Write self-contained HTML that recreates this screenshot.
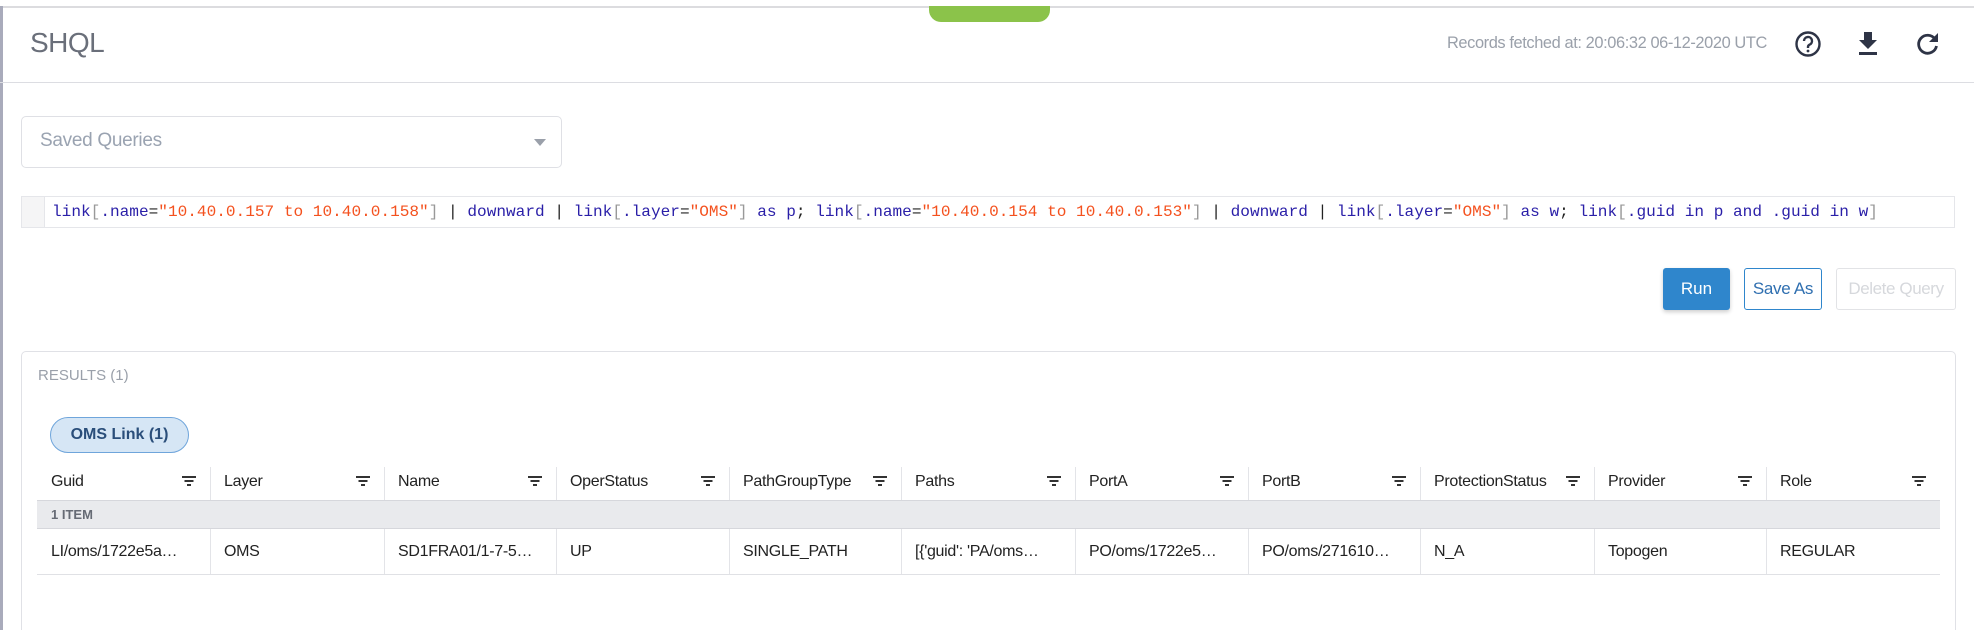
<!DOCTYPE html>
<html style="width:1974px;height:630px;overflow:hidden"><head><meta charset="utf-8"><style>
*{box-sizing:border-box;margin:0;padding:0}
body{width:1974px;height:630px;overflow:hidden;background:#fff;font-family:"Liberation Sans",sans-serif;position:relative;color:#222}
.abs{position:absolute}
.code{font-family:"Liberation Mono",monospace;font-size:16.1px;white-space:pre}
.k{color:#2a1fa8}.s{color:#f4511e}.b{color:#999}.p{color:#222}
.th,.td{position:absolute;font-size:16px;letter-spacing:-0.3px}
.th{color:#222}
.vl{position:absolute;width:1px;background:#e3e4e8}
.flt{position:absolute;width:14px;height:12px}
.flt i{position:absolute;height:2px;background:#333;left:50%;transform:translateX(-50%)}
</style></head><body>
<div class="abs" style="left:0;top:6px;width:1974px;height:2px;background:#dcdcdf"></div>
<div class="abs" style="left:0;top:6px;width:3px;height:624px;background:#a9abbb"></div>
<div class="abs" style="left:929px;top:6px;width:121px;height:16px;background:#8bc34a;border-radius:0 0 12px 12px"></div>
<div class="abs" style="left:30px;top:27px;font-size:28px;font-weight:normal;color:#6a6f7a;letter-spacing:-0.5px">SHQL</div>
<div class="abs" style="left:1447px;top:34px;font-size:16.4px;color:#9aa0aa;letter-spacing:-0.4px">Records fetched at: 20:06:32 06-12-2020 UTC</div>
<svg class="abs" style="left:1794px;top:30px" width="28" height="28" viewBox="0 0 28 28"><circle cx="14" cy="14" r="11.5" fill="none" stroke="#2e3446" stroke-width="2.4"/><path d="M10 11a4 4 0 1 1 5.5 3.7c-1 .5-1.5 1.2-1.5 2.3v1" fill="none" stroke="#2e3446" stroke-width="2.4"/><circle cx="14" cy="21" r="1.4" fill="#2e3446"/></svg>
<svg class="abs" style="left:1857px;top:32px" width="22" height="24" viewBox="0 0 22 24"><path d="M7 0h8v8h5l-9 9-9-9h5z" fill="#2e3446"/><rect x="2" y="20" width="18" height="3" fill="#2e3446"/></svg>
<svg class="abs" style="left:1916px;top:31px" width="24" height="24" viewBox="0 0 24 24"><path d="M19 8A9 9 0 1 0 20.5 15" fill="none" stroke="#2e3446" stroke-width="2.8"/><path d="M22 2v9h-9z" fill="#2e3446"/></svg>
<div class="abs" style="left:0;top:82px;width:1974px;height:1px;background:#dcdde2"></div>

<div class="abs" style="left:21px;top:116px;width:541px;height:52px;border:1px solid #dfe0e5;border-radius:5px"></div>
<div class="abs" style="left:40px;top:130px;font-size:19px;color:#9aa3b1;letter-spacing:-0.3px">Saved Queries</div>
<div class="abs" style="left:534px;top:139px;width:0;height:0;border-left:6px solid transparent;border-right:6px solid transparent;border-top:7px solid #9aa0aa"></div>

<div class="abs" style="left:21px;top:196px;width:1934px;height:32px;border:1px solid #e5e6ea"></div>
<div class="abs" style="left:22px;top:197px;width:23px;height:30px;background:#f5f5f6;border-right:1px solid #e5e6ea"></div>
<div class="abs code" style="left:52px;top:203px"><span class="k">link</span><span class="b">[</span><span class="k">.name</span><span class="p">=</span><span class="s">"10.40.0.157 to 10.40.0.158"</span><span class="b">]</span> <span class="p">|</span> <span class="k">downward</span> <span class="p">|</span> <span class="k">link</span><span class="b">[</span><span class="k">.layer</span><span class="p">=</span><span class="s">"OMS"</span><span class="b">]</span> <span class="k">as p</span><span class="p">;</span> <span class="k">link</span><span class="b">[</span><span class="k">.name</span><span class="p">=</span><span class="s">"10.40.0.154 to 10.40.0.153"</span><span class="b">]</span> <span class="p">|</span> <span class="k">downward</span> <span class="p">|</span> <span class="k">link</span><span class="b">[</span><span class="k">.layer</span><span class="p">=</span><span class="s">"OMS"</span><span class="b">]</span> <span class="k">as w</span><span class="p">;</span> <span class="k">link</span><span class="b">[</span><span class="k">.guid in p and .guid in w</span><span class="b">]</span></div>

<div class="abs" style="left:1663px;top:268px;width:67px;height:42px;background:#2f86cc;border-radius:3px;color:#fff;font-size:17px;text-align:center;line-height:42px;box-shadow:0 2px 4px rgba(0,0,0,.2)">Run</div>
<div class="abs" style="left:1744px;top:268px;width:78px;height:42px;border:1px solid #2f86cc;border-radius:3px;color:#2f6fb0;font-size:17px;text-align:center;line-height:40px;letter-spacing:-0.3px">Save As</div>
<div class="abs" style="left:1836px;top:268px;width:120px;height:42px;border:1px solid #e2e3e6;border-radius:3px;color:#d6d8dc;font-size:17px;text-align:center;line-height:40px;letter-spacing:-0.4px">Delete Query</div>

<div class="abs" style="left:21px;top:351px;width:1935px;height:279px;border:1px solid #e0e1e6;border-bottom:none;border-radius:5px 5px 0 0"></div>
<div class="abs" style="left:38px;top:367px;font-size:15px;color:#9aa0aa">RESULTS (1)</div>
<div class="abs" style="left:50px;top:417px;width:139px;height:36px;background:#d6e6f5;border:1px solid #6fa5db;border-radius:18px;color:#2a4e7a;font-weight:bold;font-size:16px;text-align:center;line-height:34px">OMS Link (1)</div>

<div class="abs" style="left:37px;top:500px;width:1903px;height:29px;background:#e9eaed;border-top:1px solid #d6d7dc;border-bottom:1px solid #d6d7dc"></div>
<div class="abs" style="left:51px;top:507px;font-size:13px;font-weight:bold;color:#666b75">1 ITEM</div>
<div class="abs" style="left:37px;top:574px;width:1903px;height:1px;background:#e0e1e5"></div>

<div id="cols"></div>
<script>
var heads=["Guid","Layer","Name","OperStatus","PathGroupType","Paths","PortA","PortB","ProtectionStatus","Provider","Role"];
var vals=["LI/oms/1722e5a…","OMS","SD1FRA01/1-7-5…","UP","SINGLE_PATH","[{'guid': 'PA/oms…","PO/oms/1722e5…","PO/oms/271610…","N_A","Topogen","REGULAR"];
var xs=[37,210,384,556,729,901,1075,1248,1420,1594,1766,1940];
var h="";
for(var i=0;i<11;i++){
 var x=xs[i];
 h+='<div class="th" style="left:'+(x+14)+'px;top:473px">'+heads[i]+'</div>';
 h+='<div class="td" style="left:'+(x+14)+'px;top:543px">'+vals[i]+'</div>';
 h+='<div class="flt" style="left:'+(xs[i+1]-28)+'px;top:476px"><i style="top:0;width:14px"></i><i style="top:4px;width:9px"></i><i style="top:8px;width:4px"></i></div>';
 if(i>0){h+='<div class="vl" style="left:'+x+'px;top:467px;height:33px"></div><div class="vl" style="left:'+x+'px;top:529px;height:45px"></div>';}
}
document.getElementById("cols").innerHTML=h;
</script>
</body></html>
